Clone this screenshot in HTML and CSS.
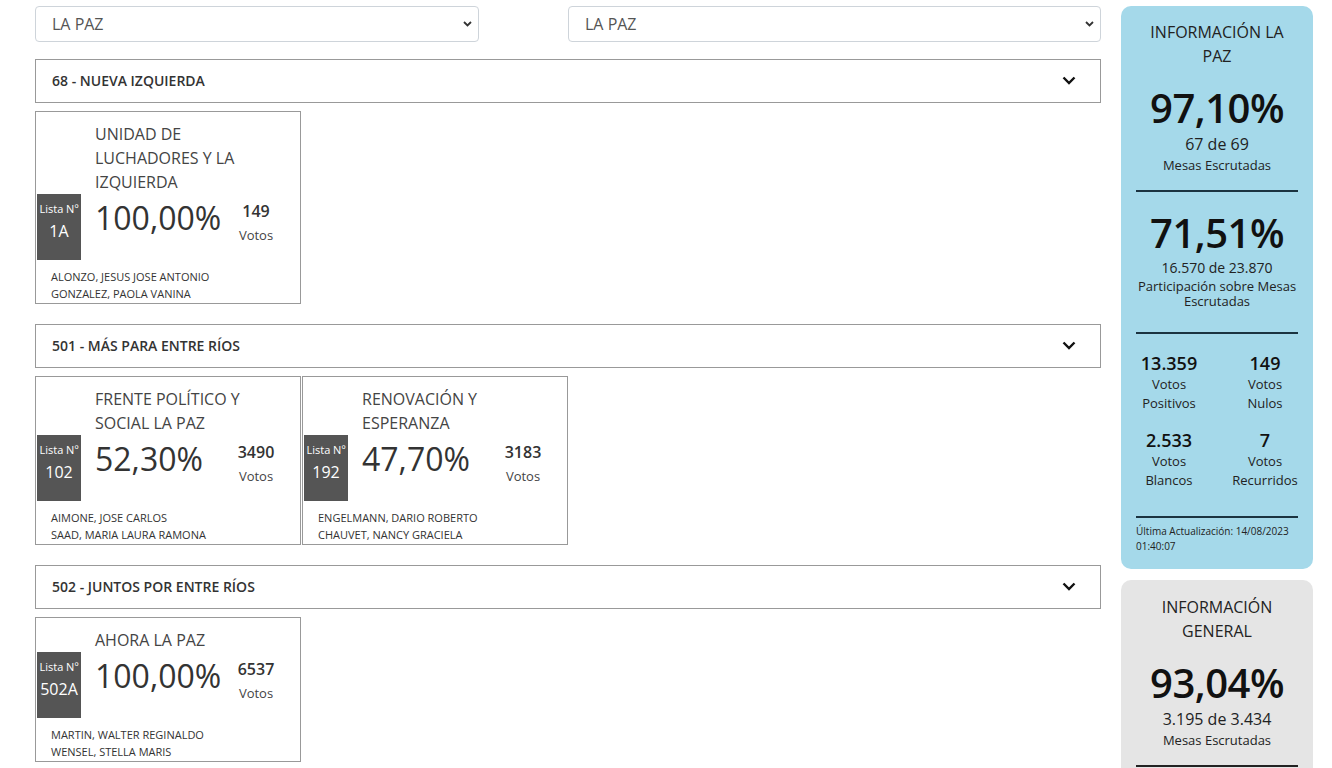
FILE: index.html
```html
<!DOCTYPE html>
<html lang="es">
<head>
  <meta charset="UTF-8" />
  <meta name="viewport" content="width=device-width, initial-scale=1.0"/>
  <title>Resultados La Paz</title>
  <link rel="stylesheet" href="styles.css">
</head>
<body>
  <div class="page">
    <main class="main">
      <div class="filters">
        <div class="select-wrap sel-dept">
          <select class="select"><option>LA PAZ</option></select>
          <svg class="select-arrow" width="9" height="6" viewBox="0 0 9 6"><path d="M1 1l3.5 3.5L8 1" fill="none" stroke="#333" stroke-width="1.8"/></svg>
        </div>
        <div class="select-wrap sel-loc">
          <select class="select"><option>LA PAZ</option></select>
          <svg class="select-arrow" width="9" height="6" viewBox="0 0 9 6"><path d="M1 1l3.5 3.5L8 1" fill="none" stroke="#333" stroke-width="1.8"/></svg>
        </div>
      </div>

      <div class="party">
        <div class="party-head">
          <span>68 - NUEVA IZQUIERDA</span>
          <svg width="14" height="9" viewBox="0 0 14 9"><path d="M1.5 1.5L7 7l5.5-5.5" fill="none" stroke="#111" stroke-width="2.4"/></svg>
        </div>
        <div class="cards">
          <div class="card">
            <div class="card-name">UNIDAD DE LUCHADORES Y LA IZQUIERDA</div>
            <div class="card-row">
              <div class="lista"><span class="lista-lbl">Lista Nº</span><span class="lista-num">1A</span></div>
              <div class="pct">100,00%</div>
              <div class="votes"><div class="votes-num">149</div><div class="votes-lbl">Votos</div></div>
            </div>
            <div class="cands">ALONZO, JESUS JOSE ANTONIO<br>GONZALEZ, PAOLA VANINA</div>
          </div>
        </div>
      </div>

      <div class="party">
        <div class="party-head">
          <span>501 - MÁS PARA ENTRE RÍOS</span>
          <svg width="14" height="9" viewBox="0 0 14 9"><path d="M1.5 1.5L7 7l5.5-5.5" fill="none" stroke="#111" stroke-width="2.4"/></svg>
        </div>
        <div class="cards">
          <div class="card">
            <div class="card-name">FRENTE POLÍTICO Y SOCIAL LA PAZ</div>
            <div class="card-row">
              <div class="lista"><span class="lista-lbl">Lista Nº</span><span class="lista-num">102</span></div>
              <div class="pct">52,30%</div>
              <div class="votes"><div class="votes-num">3490</div><div class="votes-lbl">Votos</div></div>
            </div>
            <div class="cands">AIMONE, JOSE CARLOS<br>SAAD, MARIA LAURA RAMONA</div>
          </div>
          <div class="card">
            <div class="card-name">RENOVACIÓN Y ESPERANZA</div>
            <div class="card-row">
              <div class="lista"><span class="lista-lbl">Lista Nº</span><span class="lista-num">192</span></div>
              <div class="pct">47,70%</div>
              <div class="votes"><div class="votes-num">3183</div><div class="votes-lbl">Votos</div></div>
            </div>
            <div class="cands">ENGELMANN, DARIO ROBERTO<br>CHAUVET, NANCY GRACIELA</div>
          </div>
        </div>
      </div>

      <div class="party">
        <div class="party-head">
          <span>502 - JUNTOS POR ENTRE RÍOS</span>
          <svg width="14" height="9" viewBox="0 0 14 9"><path d="M1.5 1.5L7 7l5.5-5.5" fill="none" stroke="#111" stroke-width="2.4"/></svg>
        </div>
        <div class="cards">
          <div class="card">
            <div class="card-name">AHORA LA PAZ</div>
            <div class="card-row">
              <div class="lista"><span class="lista-lbl">Lista Nº</span><span class="lista-num">502A</span></div>
              <div class="pct">100,00%</div>
              <div class="votes"><div class="votes-num">6537</div><div class="votes-lbl">Votos</div></div>
            </div>
            <div class="cands">MARTIN, WALTER REGINALDO<br>WENSEL, STELLA MARIS</div>
          </div>
        </div>
      </div>
    </main>

    <aside class="side">
      <div class="info info-local">
        <div class="info-title">INFORMACIÓN LA PAZ</div>
        <div class="info-pct first">97,10%</div>
        <div class="info-sub">67 de 69</div>
        <div class="info-lbl">Mesas Escrutadas</div>
        <div class="divider d1"></div>
        <div class="info-pct second">71,51%</div>
        <div class="info-sub small">16.570 de 23.870</div>
        <div class="info-lbl tight">Participación sobre Mesas Escrutadas</div>
        <div class="divider d2"></div>
        <div class="stats">
          <div class="stat"><div class="stat-num">13.359</div><div class="stat-lbl">Votos<br>Positivos</div></div>
          <div class="stat"><div class="stat-num">149</div><div class="stat-lbl">Votos<br>Nulos</div></div>
          <div class="stat"><div class="stat-num">2.533</div><div class="stat-lbl">Votos<br>Blancos</div></div>
          <div class="stat"><div class="stat-num">7</div><div class="stat-lbl">Votos<br>Recurridos</div></div>
        </div>
        <div class="divider d3"></div>
        <div class="updated">Última Actualización: 14/08/2023<br>01:40:07</div>
      </div>

      <div class="info info-general">
        <div class="info-title">INFORMACIÓN GENERAL</div>
        <div class="info-pct first">93,04%</div>
        <div class="info-sub">3.195 de 3.434</div>
        <div class="info-lbl">Mesas Escrutadas</div>
        <div class="divider d1"></div>
      </div>
    </aside>
  </div>
</body>
</html>
```

FILE: styles.css
```css
* { margin: 0; padding: 0; box-sizing: border-box; }
body {
  font-family: "Open Sans", Arial, sans-serif;
  background: #fff;
  color: #333;
  overflow: hidden;
}
.page {
  display: flex;
  gap: 20px;
  padding: 6px 0 0 35px;
}
.main { width: 1066px; }

/* selects */
.filters {
  display: flex;
  justify-content: space-between;
}
.select-wrap { position: relative; }
.sel-dept { width: 444px; }
.sel-loc { width: 533px; }
.select {
  appearance: none;
  -webkit-appearance: none;
  width: 100%;
  height: 36px;
  padding: 0 16px;
  font-family: inherit;
  font-size: 16px;
  color: #555;
  background: #fff;
  border: 1px solid #ced4da;
  border-radius: 4px;
}
.select-arrow {
  position: absolute;
  right: 7px;
  top: 15px;
}

/* partidos */
.party-head {
  margin-top: 17px;
  height: 44px;
  border: 1px solid #999;
  display: flex;
  align-items: center;
  justify-content: space-between;
  padding: 0 24px 1px 16px;
  font-size: 14px;
  font-weight: 600;
  color: #333;
}
.party + .party .party-head { margin-top: 20px; }
.cards {
  display: flex;
  gap: 1px;
  margin-top: 8px;
}
.card {
  width: 266px;
  border: 1px solid #999;
  padding: 10px 0 1px 0;
}
.card-name {
  margin-left: 59px;
  width: 165px;
  font-size: 16px;
  line-height: 24px;
  color: #444;
}
.card-row {
  display: flex;
}
.lista {
  width: 44px;
  height: 66px;
  margin-left: 1px;
  background: #555;
  color: #fff;
  display: flex;
  flex-direction: column;
  align-items: center;
  padding-top: 7px;
}
.lista-lbl { font-size: 11px; line-height: 16px; }
.lista-num { font-size: 16px; line-height: 24px; margin-top: 2px; }
.pct {
  width: 128px;
  margin-left: 14px;
  font-size: 32px;
  line-height: 48px;
  color: #333;
}
.votes {
  width: 66px;
  text-align: center;
  padding-top: 5px;
}
.votes-num { font-size: 16px; font-weight: 600; line-height: 24px; color: #333; }
.votes-lbl { font-size: 13px; line-height: 24px; color: #444; }
.cands {
  margin: 9px 0 0 15px;
  font-size: 11px;
  line-height: 16.5px;
  color: #333;
}

/* panel lateral */
.side { width: 192px; }
.info {
  border-radius: 10px;
  padding: 14px 15px 15px;
  text-align: center;
  color: #111;
}
.info-local { background: #a5d9ea; }
.info-general { background: #e5e5e5; margin-top: 11px; padding-top: 15px; height: 200px; }
.info-title {
  font-size: 16px;
  line-height: 24px;
  color: #222;
  padding: 0 10px;
}
.info-pct {
  font-size: 40px;
  font-weight: 600;
  line-height: 48px;
  letter-spacing: -0.5px;
}
.info-pct.first { margin-top: 16px; }
.info-pct.second { margin-top: 17px; }
.info-sub { font-size: 16px; line-height: 24px; color: #222; }
.info-sub.small { font-size: 14px; line-height: 22px; }
.info-lbl { font-size: 13px; line-height: 18px; color: #222; }
.info-lbl.tight { line-height: 15px; }
.divider { height: 2px; background: #1b3340; }
.info-general .divider { background: #222; }
.d1 { margin-top: 16px; }
.d2 { margin-top: 23px; }
.d3 { margin-top: 26px; }
.stats {
  display: grid;
  grid-template-columns: 96px 96px;
  justify-content: center;
  row-gap: 15px;
  margin: 17px -15px 0;
}
.stat-num { font-size: 18px; font-weight: 600; line-height: 24px; }
.stat-lbl { font-size: 13px; line-height: 19px; color: #222; }
.updated {
  margin-top: 6px;
  text-align: left;
  font-size: 10px;
  line-height: 15px;
  color: #222;
}
```
